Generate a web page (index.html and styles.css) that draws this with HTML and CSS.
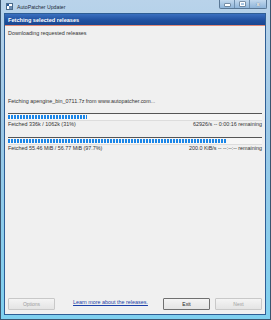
FILE: index.html
```html
<!DOCTYPE html>
<html lang="en">
<head>
    <meta charset="UTF-8">
    <title>AutoPatcher Updater</title>
<link rel="stylesheet" href="styles.css">
</head>
<body>
    <div class="window">
        <div class="titlebar">
            <svg class="appicon" width="7" height="7" viewBox="0 0 7 7">
                <rect x="0.5" y="0.5" width="6" height="6" fill="#fff" stroke="#4a6a8a"/>
                <rect x="1" y="1" width="2" height="2" fill="#2a5a9a"/>
                <rect x="3" y="3" width="3" height="3" fill="#6a8ab0"/>
            </svg>
            <span class="title">AutoPatcher Updater</span>
            <div class="controls">
                <span class="ctl"><i class="min"></i></span>
                <span class="ctl"><i class="max"></i></span>
                <span class="ctl close">x</span>
            </div>
        </div>
        <div class="client">
            <div class="banner">Fetching selected releases</div>
            <div class="content">
                <p class="lead">Downloading requested releases</p>
                <p class="file">Fetching apengine_bin_0711.7z from www.autopatcher.com...</p>
                <div class="bar"><div class="fill" style="width:31%"></div></div>
                <div class="stats">
                    <span>Fetched 336k / 1062k (31%)</span>
                    <span>62926/s -- 0:00:16 remaining</span>
                </div>
                <div class="bar"><div class="fill" style="width:86%"></div></div>
                <div class="stats">
                    <span>Fetched 55.46 MiB / 56.77 MiB (97.7%)</span>
                    <span>200.0 KiB/s -- --:--:-- remaining</span>
                </div>
                <div class="buttons">
                    <button class="btn" disabled>Options</button>
                    <a class="link" href="#">Learn more about the releases.</a>
                    <button class="btn exit">Exit</button>
                    <button class="btn" disabled>Next</button>
                </div>
            </div>
        </div>
    </div>
</body>
</html>
```

FILE: styles.css
```css
*{
    margin: 0;
    padding: 0;
    box-sizing: border-box;
}
body{
    width: 271px;
    height: 320px;
    overflow: hidden;
    font-family: "Liberation Sans", "DejaVu Sans", sans-serif;
    font-size: 5.4px;
    color: #333;
}
.window{
    width: 271px;
    height: 320px;
    display: flex;
    flex-direction: column;
    padding: 0 4px 4px 3px;
    border: 1px solid #3a5570;
    border-top: none;
    background: linear-gradient(180deg, #b9d3ea 0, #9cc8e6 40%, #7fd0ef 100%);
}
.titlebar{
    height: 13px;
    display: flex;
    align-items: center;
    padding-left: 2px;
    position: relative;
}
.appicon{
    margin-right: 4px;
}
.title{
    font-size: 5.2px;
    color: #1d2b3a;
}
.controls{
    position: absolute;
    top: 0;
    right: -1px;
    display: flex;
    border: 1px solid #5a7896;
    border-top: none;
    border-radius: 0 0 2px 2px;
    background: linear-gradient(180deg, #c3d9ee, #8fb5da);
}
.ctl{
    width: 15px;
    height: 8px;
    display: flex;
    align-items: center;
    justify-content: center;
    border-right: 1px solid #6f8fae;
    color: #fff;
    font-size: 6px;
    font-weight: bold;
    line-height: 1;
}
.ctl:last-child{
    border-right: none;
    width: 16px;
}
.min{
    width: 5px;
    height: 2px;
    margin-top: 2px;
    background: #fff;
    box-shadow: 0 0 0 0.5px #456;
}
.max{
    width: 5px;
    height: 4px;
    border: 1px solid #fff;
    border-top-width: 1.5px;
    box-shadow: 0 0 0 0.5px #456;
}
.close{
    text-shadow: 0 0 1px #234;
}
.client{
    flex: 1;
    display: flex;
    flex-direction: column;
    border: 1px solid #2e5e95;
    background: #f0f0f0;
}
.banner{
    height: 12px;
    padding: 3px 0 0 3px;
    background: linear-gradient(180deg, #3a70c0 0, #1f4f9e 60%, #1a4690 100%);
    border-bottom: 1px solid #e08a78;
    color: #fff;
    font-weight: bold;
    font-size: 5.6px;
    line-height: 6px;
}
.content{
    flex: 1;
    display: flex;
    flex-direction: column;
    padding: 4px 3px 4px 3px;
}
.lead{
    line-height: 7px;
}
.file{
    line-height: 7px;
    margin-top: 61px;
}
.bar{
    height: 8px;
    margin-top: 8px;
    border-top: 1px solid #555;
    border-bottom: 1px solid #ddd;
    background: #f6f6f6;
    padding: 1px 0;
}
.fill{
    height: 100%;
    background: repeating-linear-gradient(90deg, #1a86e8 0, #1a86e8 2px, transparent 2px, transparent 3px);
}
.stats{
    display: flex;
    justify-content: space-between;
    line-height: 6px;
}
.stats + .bar{
    margin-top: 10px;
}
.buttons{
    margin-top: auto;
    display: flex;
    align-items: center;
}
.btn{
    width: 48px;
    height: 12px;
    font-family: inherit;
    font-size: 5px;
    color: #a0a0a0;
    background: linear-gradient(180deg, #f4f4f4, #e4e4e4);
    border: 1px solid #c8c8c8;
    border-radius: 1px;
}
.exit{
    color: #222;
    border-color: #707070;
    margin-right: 5px;
}
.link{
    white-space: nowrap;
    margin: 0 15px 4px 18px;
    color: #1a3fa8;
    font-size: 5.4px;
}
```
